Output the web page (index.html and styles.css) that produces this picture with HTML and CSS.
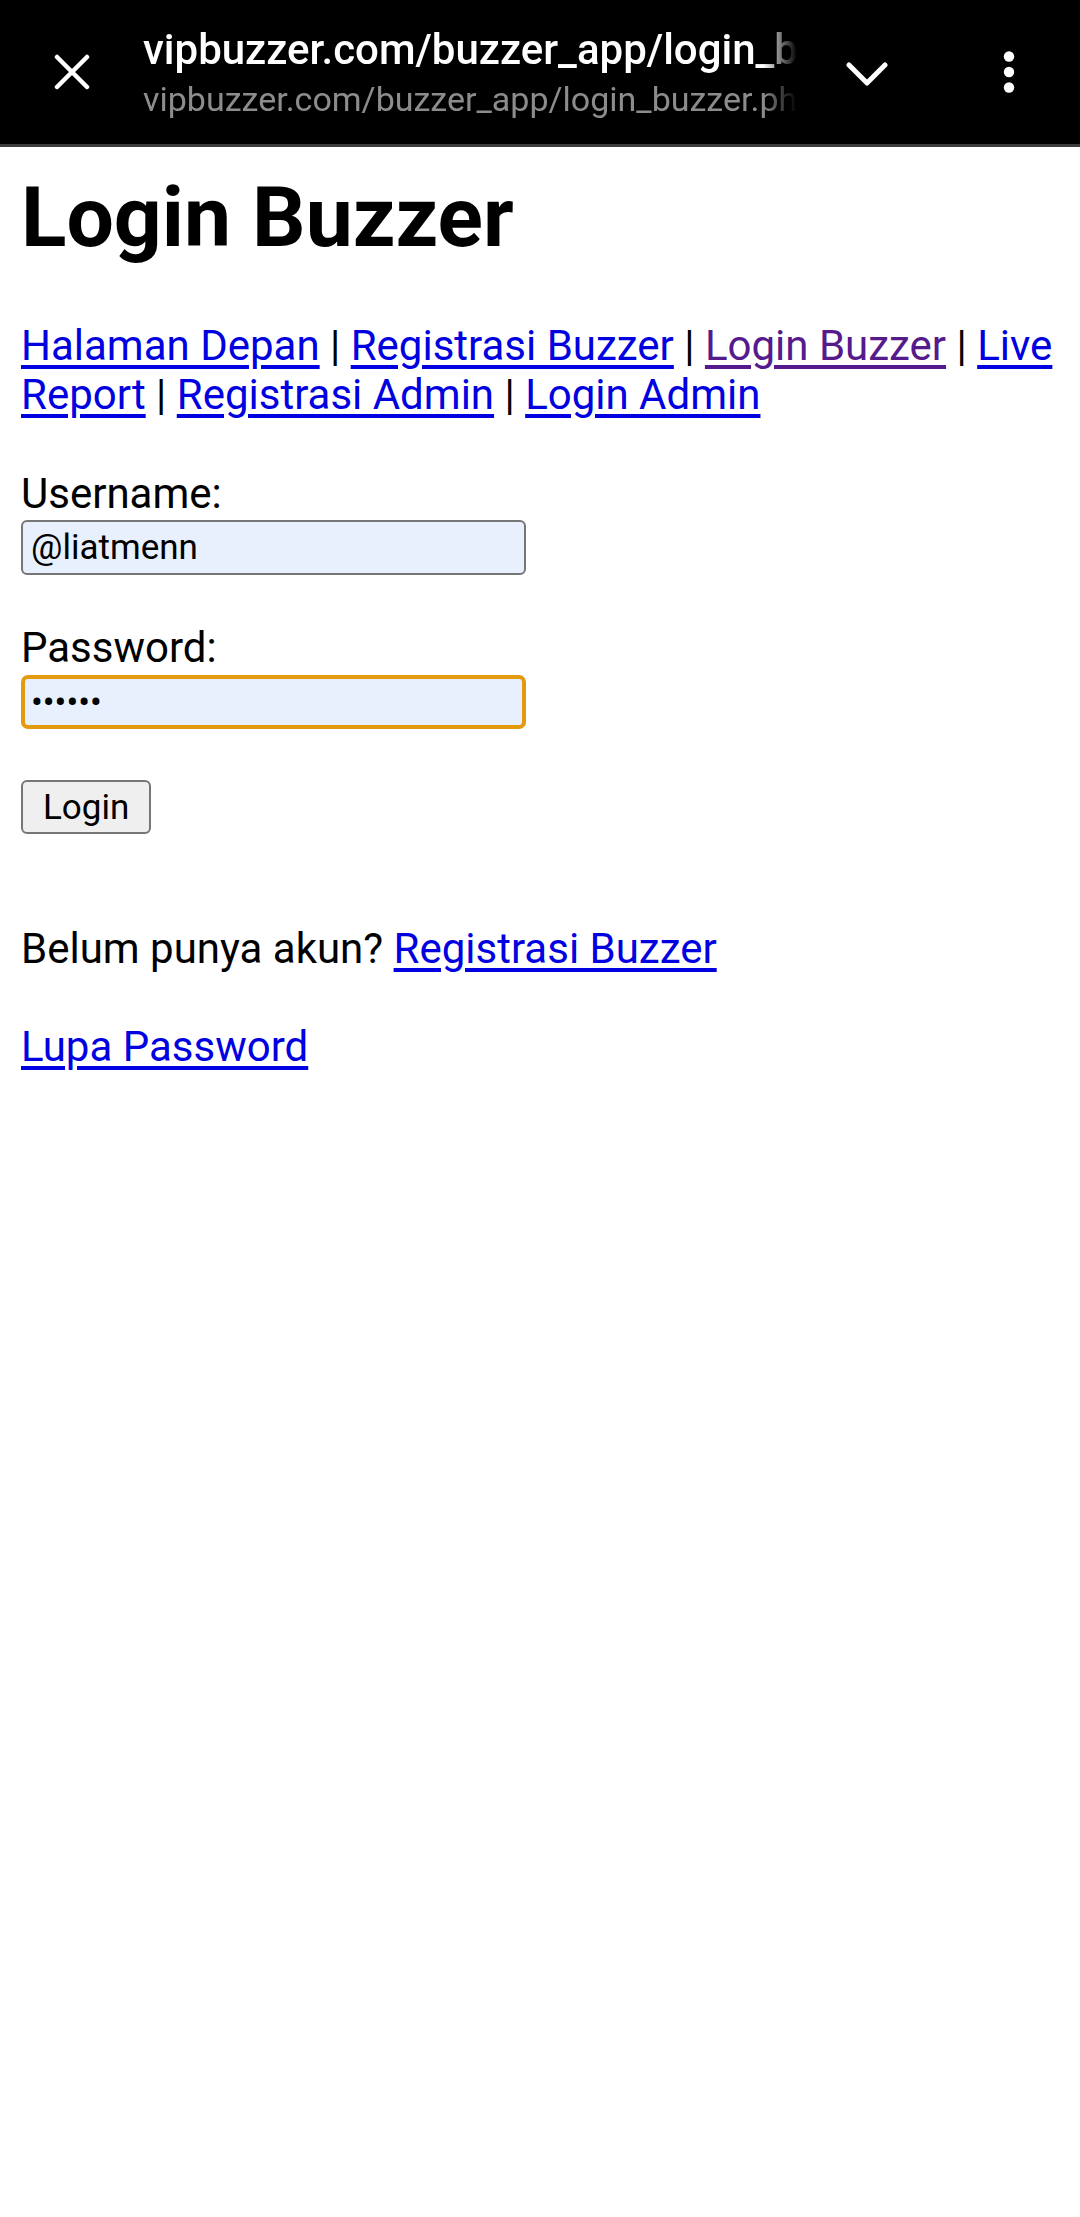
FILE: index.html
```html
<!DOCTYPE html>
<html lang="id">
<head>
    <meta charset="UTF-8">
    <meta name="viewport" content="width=device-width, initial-scale=1.0">
    <title>Login Buzzer</title>
    <link rel="stylesheet" href="styles.css">
</head>
<body>
    <!-- custom tab toolbar -->
    <div class="topbar">
        <div class="bar-btn close-btn">
            <svg width="36" height="36" viewBox="0 0 36 36">
                <path d="M3 3 L33 33 M33 3 L3 33" stroke="#fff" stroke-width="4.5" stroke-linecap="round" fill="none"/>
            </svg>
        </div>
        <div class="titles">
            <div class="page-title">vipbuzzer.com/buzzer_app/login_buzzer.php</div>
            <div class="page-url">vipbuzzer.com/buzzer_app/login_buzzer.php</div>
        </div>
        <div class="bar-btn chevron-btn">
            <svg width="42" height="26" viewBox="0 0 42 26">
                <path d="M3 3 L21 21 L39 3" stroke="#fff" stroke-width="5" stroke-linecap="round" stroke-linejoin="round" fill="none"/>
            </svg>
        </div>
        <div class="bar-btn menu-btn">
            <svg width="12" height="42" viewBox="0 0 12 42">
                <circle cx="6" cy="5.5" r="5.2" fill="#fff"/>
                <circle cx="6" cy="21" r="5.2" fill="#fff"/>
                <circle cx="6" cy="36.5" r="5.2" fill="#fff"/>
            </svg>
        </div>
    </div>

    <div class="page">
        <h1>Login Buzzer</h1>

        <p class="nav">
            <a href="#">Halaman Depan</a> |
            <a href="#">Registrasi Buzzer</a> |
            <a href="#" class="visited">Login Buzzer</a> |
            <a href="#">Live Report</a> |
            <a href="#">Registrasi Admin</a> |
            <a href="#">Login Admin</a>
        </p>

        <form class="login-form" onsubmit="return false">
            <label for="username">Username:</label>
            <input type="text" id="username" class="field" value="@liatmenn">

            <label for="password" class="gap">Password:</label>
            <input type="password" id="password" class="field focused" value="123456">

            <button type="submit" class="login-btn">Login</button>
        </form>

        <p class="register">Belum punya akun? <a href="#">Registrasi Buzzer</a></p>
        <p class="forgot"><a href="#">Lupa Password</a></p>
    </div>
</body>
</html>
```

FILE: styles.css
```css
* {
    box-sizing: border-box;
}

body {
    margin: 0;
    background: #fff;
    color: #000;
    font-family: Roboto, "Liberation Sans", sans-serif;
    font-size: 42px;
    line-height: 49px;
}

/* toolbar */
.topbar {
    display: flex;
    align-items: center;
    height: 147px;
    background: #000;
    border-bottom: 3px solid #3d3d3d;
}

.bar-btn {
    display: flex;
    align-items: center;
    justify-content: center;
    height: 100%;
}

.close-btn { width: 143px; }
.chevron-btn { width: 140px; padding-top: 6px; }
.menu-btn { width: 143px; }

.titles {
    width: 654px;
    height: 100%;
    padding-top: 25px;
    overflow: hidden;
    white-space: nowrap;
    -webkit-mask-image: linear-gradient(to right, #000 calc(100% - 34px), transparent);
    mask-image: linear-gradient(to right, #000 calc(100% - 34px), transparent);
}

.page-title {
    color: #fff;
    font-size: 42px;
    font-weight: 500;
    line-height: 50px;
}

.page-url {
    margin-top: 4px;
    color: #8c8c8c;
    font-size: 34px;
    line-height: 40px;
}

/* page */
.page {
    padding: 0 21px;
}

h1 {
    margin: 22px 0 54px;
    font-size: 84px;
    line-height: 98px;
    font-weight: 700;
}

a {
    color: #0000e0;
    text-decoration: underline;
    text-decoration-thickness: 4px;
    text-underline-offset: 5px;
}

a.visited { color: #551a8b; }

.nav {
    margin: 0;
}

.login-form {
    margin-top: 50px;
}

.login-form label {
    display: block;
}

.login-form label.gap {
    margin-top: 48px;
}

.field {
    display: block;
    width: 505px;
    height: 55px;
    margin-top: 2px;
    padding: 0 8px;
    border: 2px solid #767676;
    border-radius: 6px;
    background: #e8f0fe;
    color: #000;
    font-family: Roboto, sans-serif;
    font-size: 35px;
}

.field.focused {
    margin-top: 3px;
    height: 54px;
    padding: 0 6px;
    border: 4px solid #e39a0e;
    border-radius: 7px;
    outline: none;
}

.login-btn {
    display: block;
    height: 54px;
    margin-top: 51px;
    padding: 0 20px;
    border: 2px solid #767676;
    border-radius: 6px;
    background: #efefef;
    color: #000;
    font-family: Roboto, sans-serif;
    font-size: 35px;
}

.register {
    margin: 90px 0 0;
}

.forgot {
    margin: 49px 0 0;
}
```
